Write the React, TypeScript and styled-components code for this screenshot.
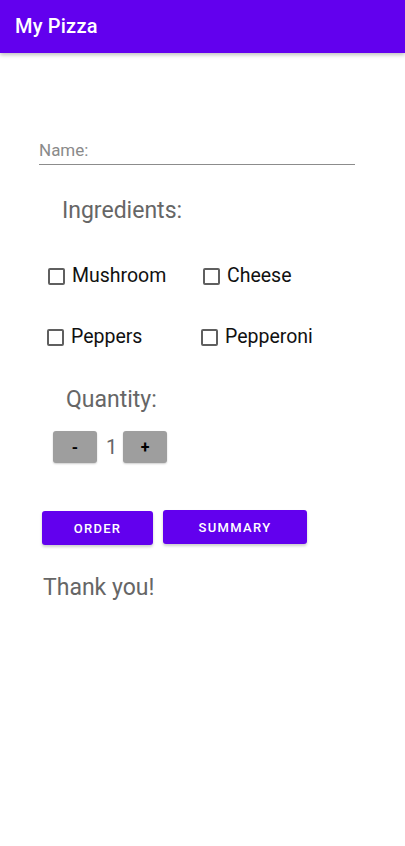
import { useState } from 'react';
import styled, { createGlobalStyle } from 'styled-components';

const GlobalStyle = createGlobalStyle`
  body {
    margin: 0;
    background: #ffffff;
    font-family: Roboto, 'Noto Sans', sans-serif;
  }
  * {
    box-sizing: border-box;
  }
`;

const ingredients = ['Mushroom', 'Cheese', 'Peppers', 'Pepperoni'];

export default function App() {
  const [quantity, setQuantity] = useState(1);
  const [checked, setChecked] = useState<string[]>([]);

  const toggle = (name: string) =>
    setChecked((prev) =>
      prev.includes(name) ? prev.filter((n) => n !== name) : [...prev, name]
    );

  return (
    <Screen>
      <GlobalStyle />
      <AppBar>
        <AppTitle>My Pizza</AppTitle>
      </AppBar>
      <Content>
        <NameField placeholder="Name:" />
        <Label indent={23} top={32}>
          Ingredients:
        </Label>
        <CheckGrid>
          {ingredients.map((item, i) => (
            <CheckItem
              key={item}
              shift={i < 2 ? 0 : i === 2 ? -1 : -2}
              onClick={() => toggle(item)}
            >
              <Box checked={checked.includes(item)} />
              {item}
            </CheckItem>
          ))}
        </CheckGrid>
        <Label indent={27} top={37}>
          Quantity:
        </Label>
        <QuantityRow>
          <StepButton onClick={() => setQuantity((q) => Math.max(0, q - 1))}>
            -
          </StepButton>
          <Count>{quantity}</Count>
          <StepButton onClick={() => setQuantity((q) => q + 1)}>+</StepButton>
        </QuantityRow>
        <ActionRow>
          <PrimaryButton width={111}>Order</PrimaryButton>
          <PrimaryButton width={144} lift={1}>
            Summary
          </PrimaryButton>
        </ActionRow>
        <ThankYou>Thank you!</ThankYou>
      </Content>
    </Screen>
  );
}

const Screen = styled.div`
  width: 405px;
  min-height: 846px;
  background: #ffffff;
`;

const AppBar = styled.header`
  height: 53px;
  background: #6200ee;
  display: flex;
  align-items: center;
  padding: 0 15px 2px;
  box-shadow: 0 2px 4px rgba(0, 0, 0, 0.25);
`;

const AppTitle = styled.h1`
  margin: 0;
  color: #ffffff;
  font-size: 20px;
  font-weight: 500;
  letter-spacing: 0.2px;
`;

const Content = styled.main`
  display: flex;
  flex-direction: column;
  align-items: flex-start;
  padding: 86px 0 0 39px;
`;

const NameField = styled.input`
  width: 316px;
  height: 26px;
  border: none;
  border-bottom: 1.5px solid #8c8c8c;
  padding: 0 0 4px 0;
  font-family: inherit;
  font-size: 17px;
  color: #222;
  outline: none;
  background: transparent;

  &::placeholder {
    color: #8a8a8a;
  }
`;

const Label = styled.div<{ indent: number; top: number }>`
  margin-top: ${({ top }) => top}px;
  margin-left: ${({ indent }) => indent}px;
  font-size: 23px;
  color: #666666;
  line-height: 28px;
`;

const CheckGrid = styled.div`
  margin-top: 39px;
  margin-left: 9px;
  display: grid;
  grid-template-columns: 155px 150px;
  row-gap: 37px;
`;

const CheckItem = styled.label<{ shift: number }>`
  display: flex;
  align-items: center;
  gap: 7px;
  margin-left: ${({ shift }) => shift}px;
  font-size: 19.5px;
  color: #111111;
  line-height: 24px;
  cursor: pointer;
`;

const Box = styled.span<{ checked: boolean }>`
  width: 17px;
  height: 17px;
  border: 2px solid #5f5f5f;
  border-radius: 2px;
  background: ${({ checked }) => (checked ? '#6200ee' : 'transparent')};
  border-color: ${({ checked }) => (checked ? '#6200ee' : '#5f5f5f')};
`;

const QuantityRow = styled.div`
  margin-top: 17px;
  margin-left: 14px;
  display: flex;
  align-items: center;
  gap: 9px;
`;

const StepButton = styled.button`
  width: 44px;
  height: 32px;
  border: none;
  border-radius: 3px;
  background: #9e9e9e;
  color: #000000;
  font-family: inherit;
  font-size: 16px;
  font-weight: 700;
  box-shadow: 0 1px 2px rgba(0, 0, 0, 0.2);
  cursor: pointer;
`;

const Count = styled.span`
  font-size: 20px;
  color: #666666;
  width: 8px;
  text-align: center;
`;

const ActionRow = styled.div`
  margin-top: 48px;
  margin-left: 3px;
  display: flex;
  align-items: flex-start;
  gap: 10px;
`;

const PrimaryButton = styled.button<{ width: number; lift?: number }>`
  width: ${({ width }) => width}px;
  height: 34px;
  margin-top: ${({ lift }) => (lift ? -lift : 0)}px;
  border: none;
  border-radius: 3px;
  background: #6200ee;
  color: #ffffff;
  font-family: inherit;
  font-size: 13px;
  font-weight: 500;
  letter-spacing: 1.3px;
  text-transform: uppercase;
  box-shadow: 0 2px 3px rgba(0, 0, 0, 0.2);
  cursor: pointer;
`;

const ThankYou = styled.p`
  margin: 29px 0 0 4px;
  font-size: 23px;
  color: #666666;
  line-height: 28px;
`;
